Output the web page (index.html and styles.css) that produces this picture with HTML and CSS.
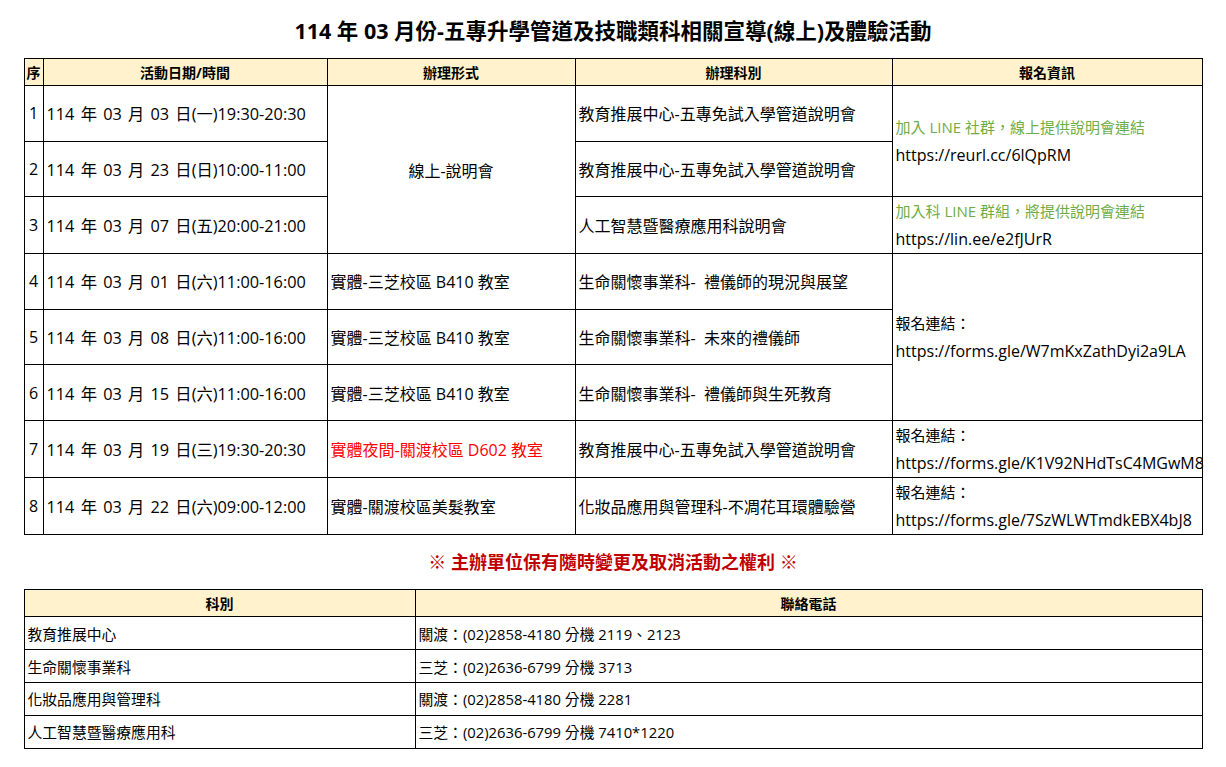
FILE: index.html
```html
<!DOCTYPE html>
<html lang="zh-Hant">
<head>
<meta charset="utf-8">
<title>114 年 03 月份活動</title>
<link rel="stylesheet" href="styles.css">
</head>
<body>
<main class="page">
  <h1 class="title">114 年 03 月份-五專升學管道及技職類科相關宣導(線上)及體驗活動</h1>

  <table class="schedule">
    <colgroup>
      <col class="c-no">
      <col class="c-date">
      <col class="c-form">
      <col class="c-dept">
      <col class="c-info">
    </colgroup>
    <thead>
      <tr>
        <th>序</th>
        <th>活動日期/時間</th>
        <th>辦理形式</th>
        <th>辦理科別</th>
        <th>報名資訊</th>
      </tr>
    </thead>
    <tbody>
      <tr>
        <td class="no">1</td>
        <td class="date">114 年 03 月 03 日(一)19:30-20:30</td>
        <td class="form center" rowspan="3">線上-說明會</td>
        <td class="dept">教育推展中心-五專免試入學管道說明會</td>
        <td class="info" rowspan="2"><div class="line green">加入 LINE 社群，線上提供說明會連結</div><div class="line url">https://reurl.cc/6lQpRM</div></td>
      </tr>
      <tr>
        <td class="no">2</td>
        <td class="date">114 年 03 月 23 日(日)10:00-11:00</td>
        <td class="dept">教育推展中心-五專免試入學管道說明會</td>
      </tr>
      <tr>
        <td class="no">3</td>
        <td class="date">114 年 03 月 07 日(五)20:00-21:00</td>
        <td class="dept">人工智慧暨醫療應用科說明會</td>
        <td class="info"><div class="line green">加入科 LINE 群組，將提供說明會連結</div><div class="line url">https://lin.ee/e2fJUrR</div></td>
      </tr>
      <tr>
        <td class="no">4</td>
        <td class="date">114 年 03 月 01 日(六)11:00-16:00</td>
        <td class="form">實體-三芝校區 B410 教室</td>
        <td class="dept">生命關懷事業科-&nbsp; 禮儀師的現況與展望</td>
        <td class="info" rowspan="3"><div class="line label">報名連結：</div><div class="line url">https://forms.gle/W7mKxZathDyi2a9LA</div></td>
      </tr>
      <tr>
        <td class="no">5</td>
        <td class="date">114 年 03 月 08 日(六)11:00-16:00</td>
        <td class="form">實體-三芝校區 B410 教室</td>
        <td class="dept">生命關懷事業科-&nbsp; 未來的禮儀師</td>
      </tr>
      <tr>
        <td class="no">6</td>
        <td class="date">114 年 03 月 15 日(六)11:00-16:00</td>
        <td class="form">實體-三芝校區 B410 教室</td>
        <td class="dept">生命關懷事業科-&nbsp; 禮儀師與生死教育</td>
      </tr>
      <tr>
        <td class="no">7</td>
        <td class="date">114 年 03 月 19 日(三)19:30-20:30</td>
        <td class="form red">實體夜間-關渡校區 D602 教室</td>
        <td class="dept">教育推展中心-五專免試入學管道說明會</td>
        <td class="info"><div class="line label">報名連結：</div><div class="line url">https://forms.gle/K1V92NHdTsC4MGwM8</div></td>
      </tr>
      <tr>
        <td class="no">8</td>
        <td class="date">114 年 03 月 22 日(六)09:00-12:00</td>
        <td class="form">實體-關渡校區美髮教室</td>
        <td class="dept">化妝品應用與管理科-不凋花耳環體驗營</td>
        <td class="info"><div class="line label">報名連結：</div><div class="line url">https://forms.gle/7SzWLWTmdkEBX4bJ8</div></td>
      </tr>
    </tbody>
  </table>

  <p class="notice">※ 主辦單位保有隨時變更及取消活動之權利 ※</p>

  <table class="contacts">
    <colgroup>
      <col class="c-name">
      <col class="c-phone">
    </colgroup>
    <thead>
      <tr>
        <th>科別</th>
        <th>聯絡電話</th>
      </tr>
    </thead>
    <tbody>
      <tr><td>教育推展中心</td><td>關渡：(02)2858-4180 分機 2119、2123</td></tr>
      <tr><td>生命關懷事業科</td><td>三芝：(02)2636-6799 分機 3713</td></tr>
      <tr><td>化妝品應用與管理科</td><td>關渡：(02)2858-4180 分機 2281</td></tr>
      <tr><td>人工智慧暨醫療應用科</td><td>三芝：(02)2636-6799 分機 7410*1220</td></tr>
    </tbody>
  </table>
</main>
</body>
</html>
```

FILE: styles.css
```css
html, body {
  margin: 0;
  background: #ffffff;
}

body {
  font-family: "Open Sans", "Noto Sans CJK TC", sans-serif;
  color: #000000;
}

.page {
  width: 1226px;
}

.title {
  margin: 0;
  padding: 16px 0 12px;
  line-height: 30px;
  font-size: 21.5px;
  font-weight: 700;
  text-align: center;
}

/* ---------- tables ---------- */
.schedule,
.contacts {
  width: 1178px;
  margin: 0 auto;
  border-collapse: collapse;
  table-layout: fixed;
}

.c-no { width: 19px; }
.c-date { width: 284px; }
.c-form { width: 248px; }
.c-dept { width: 317px; }
.c-info { width: 310px; }

.schedule th,
.schedule td,
.contacts th,
.contacts td {
  border: 1px solid #000000;
  padding: 0 3px;
  white-space: nowrap;
  overflow: visible;
}

.schedule th,
.contacts th {
  background: #fff2cc;
  font-size: 14px;
  font-weight: 700;
  text-align: center;
  vertical-align: middle;
}

.schedule th {
  height: 26px;
}

.contacts th {
  height: 26.5px;
}

.schedule th:first-child {
  padding: 0;
}

.schedule td {
  height: 54.6px;
  font-size: 16px;
  vertical-align: middle;
  text-align: left;
}

.schedule td.no {
  padding: 0;
  text-align: center;
}

.schedule td.date {
  word-spacing: 2px;
  font-size: 16.3px;
}

.schedule td.center {
  text-align: center;
}

.schedule td.red {
  color: #ff0000;
}

.info .line {
  line-height: 28px;
}

.info .green {
  color: #70ad47;
  font-size: 15px;
}

.info .label {
  font-size: 15px;
}

.info .url {
  font-size: 16px;
}

/* ---------- notice ---------- */
.notice {
  margin: 0;
  height: 54px;
  line-height: 54px;
  text-align: center;
  color: #c00000;
  font-size: 18px;
  font-weight: 700;
}

/* ---------- contacts table ---------- */
.c-name { width: 391px; }
.c-phone { width: 787px; }

.contacts td {
  height: 31.8px;
  font-size: 14.8px;
  vertical-align: middle;
  text-align: left;
}
```
